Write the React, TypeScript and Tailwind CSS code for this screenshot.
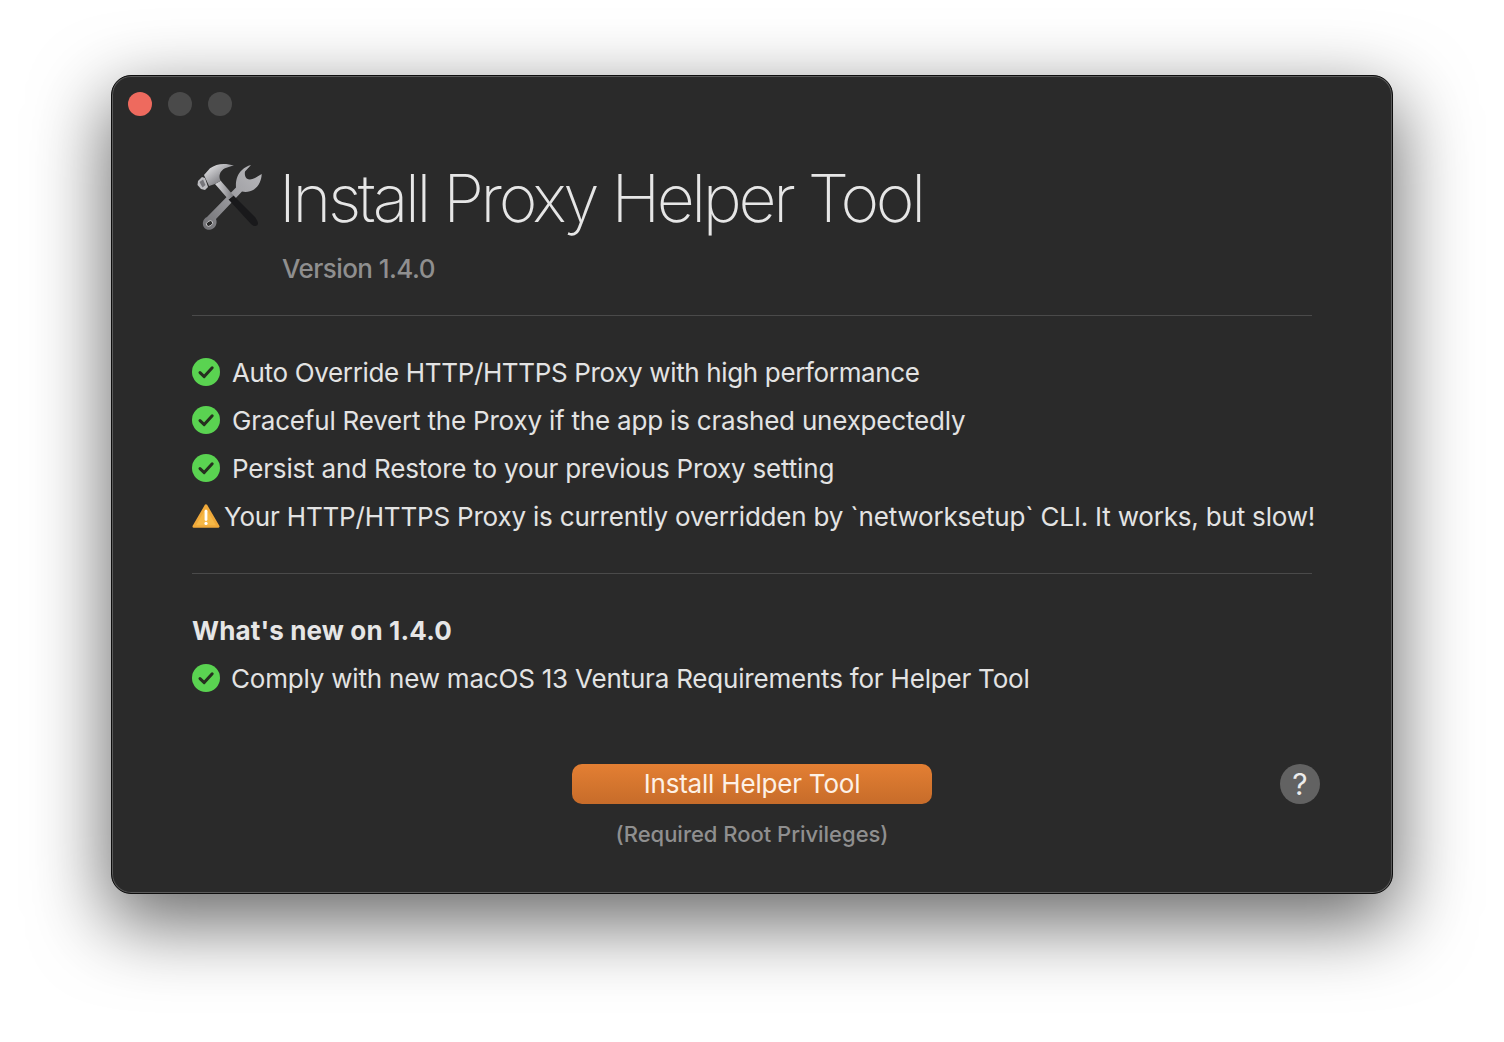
const features = [
  { text: "Auto Override HTTP/HTTPS Proxy with high performance", tracking: "tracking-[-0.35px]" },
  { text: "Graceful Revert the Proxy if the app is crashed unexpectedly", tracking: "tracking-[-0.2px]" },
  { text: "Persist and Restore to your previous Proxy setting", tracking: "tracking-[-0.18px]" },
];

const CheckIcon = () => (
  <svg width="28" height="28" viewBox="0 0 28 28" className="shrink-0">
    <circle cx="14" cy="14" r="14" fill="#5ad351" />
    <path d="M8 14.6l4.2 4 8-8.8" fill="none" stroke="#26301f" strokeWidth="3" strokeLinecap="round" strokeLinejoin="round" />
  </svg>
);

const WarningIcon = () => (
  <svg width="28" height="26" viewBox="0 0 28 26" className="shrink-0">
    <path d="M14 2.5L26.2 23.5H1.8z" fill="#f6b846" stroke="#f0a93a" strokeWidth="2.6" strokeLinejoin="round" />
    <path d="M14 8.2v8.4" stroke="#fff" strokeWidth="2.8" strokeLinecap="round" />
    <circle cx="14" cy="20.4" r="1.6" fill="#fff" />
  </svg>
);

const ToolsIcon = () => (
  <svg width="70" height="70" viewBox="0 0 70 70" className="shrink-0 mb-[2px]">
    <defs>
      <linearGradient id="metal" x1="1" y1="0" x2="0" y2="1">
        <stop offset="0" stopColor="#b9b9bc" />
        <stop offset="0.4" stopColor="#a4a4a8" />
        <stop offset="1" stopColor="#6f6f73" />
      </linearGradient>
      <linearGradient id="head" x1="0" y1="0" x2="1" y2="1">
        <stop offset="0" stopColor="#f4f4f6" />
        <stop offset="0.5" stopColor="#a0a0a4" />
        <stop offset="1" stopColor="#4e4e52" />
      </linearGradient>
      <linearGradient id="neck" x1="0" y1="0" x2="1" y2="0">
        <stop offset="0" stopColor="#dcdcdf" />
        <stop offset="1" stopColor="#77777b" />
      </linearGradient>
    </defs>
    {/* wrench */}
    <path
      d="M56 3L50 9.5C49.5 12.5 50 15 51.7 16.5C54 18 57 17.5 60 16L66.7 12C66.5 18 64 24 59 27.5C55.5 29.7 51 30.5 47 29.5L21 57C22.5 61 21 66 16 67.5C11 69 7 65 8 60C8.5 57.5 10 56 12 55L41 25.5C40.5 19 42 12.5 47 8C49.5 5.5 52.5 4 56 3z"
      fill="url(#metal)"
    />
    <ellipse cx="14.5" cy="61.5" rx="3.4" ry="2.4" transform="rotate(-35 14.5 61.5)" fill="#2a2a2a" stroke="#dadadc" strokeWidth="0.8" />
    {/* hammer */}
    <path d="M33.5 37.5L38.5 33.5L60 55C62 58 64 61 62.5 63C60.5 65 58 64 56 62z" fill="#19191b" />
    <path d="M20 22L25.7 18.7L38.5 33.5L33.5 37.5z" fill="url(#neck)" />
    <path d="M39 3.7C31 1 22 1 15 6.3L9 13L14 24L20 22L25.7 18.7C23 14 25 9 30 6.3C33 5 36 4 39 3.7z" fill="url(#head)" />
    <path d="M3 19L7 15L10 16L13 25L10 28L6 27L2.5 23z" fill="#bdbdc1" />
    <path d="M4.5 20L8 17.5L10.5 23L7.5 25.5z" fill="#76767b" />
  </svg>
);

export default function App() {
  return (
    <div className="min-h-[1042px] bg-white pt-[75px] flex justify-center font-['Inter','Liberation_Sans',sans-serif]">
      <div className="w-[1282px] h-[819px] rounded-[20px] bg-[#2a2a2a] border border-[#0e0e0e] shadow-[0_26px_74px_4px_rgba(0,0,0,0.58),inset_0_0_0_1px_#5a5a5a] overflow-hidden">
        <div className="flex gap-4 pl-[16px] pt-[16px]">
          <div className="w-6 h-6 rounded-full bg-[#ee6a5e]" />
          <div className="w-6 h-6 rounded-full bg-[#4a4a4a]" />
          <div className="w-6 h-6 rounded-full bg-[#4a4a4a]" />
        </div>

        <div className="px-[80px]">
          <div className="mt-[42px] flex items-center h-[80px] gap-[14px] pl-[3px]">
            <ToolsIcon />
            <h1 className="text-[66px] leading-none font-extralight tracking-[-3.34px] text-[#e6e6e6] whitespace-nowrap">
              Install Proxy Helper Tool
            </h1>
          </div>
          <p className="mt-[15px] ml-[90px] text-[26px] leading-8 font-medium tracking-[-0.55px] text-[#8f8f8f]">Version 1.4.0</p>

          <hr className="mt-[30px] border-[#4a4a4a]" />

          <ul className="mt-[32px]">
            {features.map((item) => (
              <li key={item.text} className={`flex items-center h-12 gap-3 text-[26px] text-[#e3e3e3] whitespace-nowrap ${item.tracking}`}>
                <CheckIcon />
                <span>{item.text}</span>
              </li>
            ))}
            <li className="flex items-center h-12 gap-[4px] text-[26px] text-[#e3e3e3] tracking-[-0.19px] whitespace-nowrap">
              <WarningIcon />
              <span>Your HTTP/HTTPS Proxy is currently overridden by `networksetup` CLI. It works, but slow!</span>
            </li>
          </ul>

          <hr className="mt-[33px] border-[#4a4a4a]" />

          <h2 className="mt-[32px] h-12 flex items-center text-[26px] font-bold tracking-[0.15px] text-[#e6e6e6]">What's new on 1.4.0</h2>
          <div className="flex items-center h-12 gap-[11px] text-[26px] text-[#e3e3e3] tracking-[-0.2px] whitespace-nowrap">
            <CheckIcon />
            <span>Comply with new macOS 13 Ventura Requirements for Helper Tool</span>
          </div>
        </div>

        <div className="mt-[62px] px-[72px] grid grid-cols-[1fr_360px_1fr] items-start">
          <div />
          <div className="flex flex-col items-center">
            <button className="w-[360px] h-10 rounded-[10px] bg-gradient-to-b from-[#e37f33] to-[#c76c2a] text-[26px] leading-[38px] tracking-[-0.2px] text-[#fdf1e6]">
              Install Helper Tool
            </button>
            <p className="mt-4 text-[22px] leading-7 font-medium tracking-[-0.02px] text-[#8f8f8f]">(Required Root Privileges)</p>
          </div>
          <div className="flex justify-end">
            <button className="w-10 h-10 rounded-full bg-[#626262] text-[30px] font-normal leading-none text-[#ececec]">?</button>
          </div>
        </div>
      </div>
    </div>
  );
}
